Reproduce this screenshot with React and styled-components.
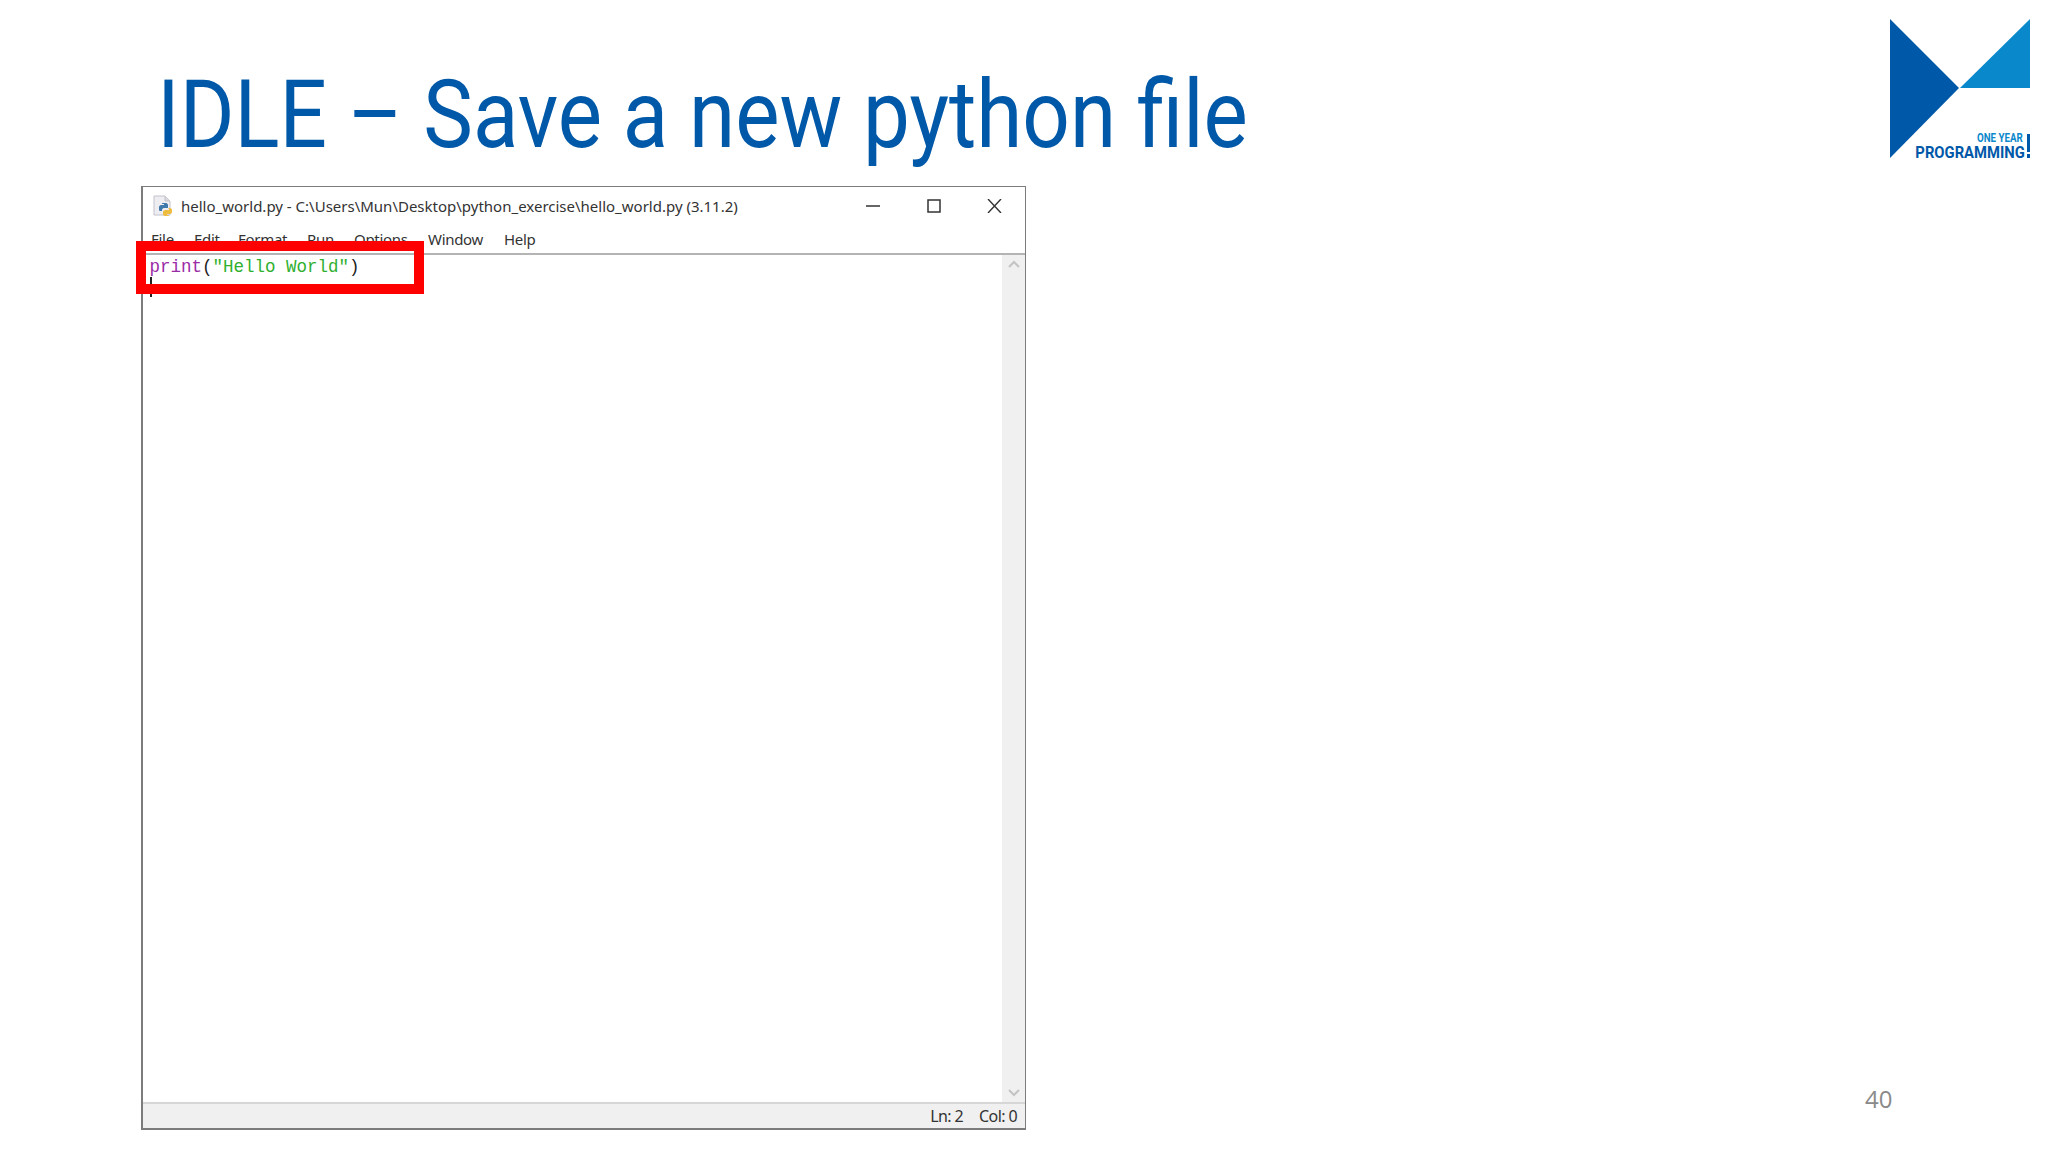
import React from 'react';
import styled, { createGlobalStyle } from 'styled-components';

const GlobalStyle = createGlobalStyle`
    html, body {
        margin: 0;
        padding: 0;
        background: #ffffff;
    }
`;

const Slide = styled.div`
    width: 2048px;
    height: 1152px;
    display: flex;
    flex-direction: column;
    overflow: hidden;
    background: #ffffff;
`;

const Header = styled.div`
    height: 186px;
    display: flex;
    justify-content: space-between;
    align-items: flex-start;
    padding: 19px 18px 0 157px;
    box-sizing: border-box;
`;

const Title = styled.h1`
    margin: 41px 0 0;
    font-family: Roboto, "Liberation Sans", sans-serif;
    font-weight: 400;
    font-size: 94px;
    line-height: 110px;
    color: #0058a8;
    white-space: nowrap;
    transform: scaleX(0.889);
    transform-origin: left center;
`;

const LogoBox = styled.div`
    position: relative;
    width: 140px;
    height: 140px;
    flex: none;
`;

const LogoCaption = styled.div`
    position: absolute;
    right: 5px;
    bottom: -1px;
    display: flex;
    flex-direction: column;
    align-items: flex-end;
    font-family: Roboto, sans-serif;
    font-weight: 700;
    white-space: nowrap;
`;

const OneYear = styled.span`
    font-size: 12.5px;
    line-height: 14px;
    color: #0a88cc;
    transform: scaleX(0.78);
    transform-origin: right center;
    margin-right: 2px;
`;

const Programming = styled.span`
    font-size: 17px;
    line-height: 15px;
    color: #0058a8;
    transform: scaleX(0.87);
    transform-origin: right center;
`;

const Bang = styled.div`
    position: absolute;
    right: 0;
    top: 115px;
    width: 3px;
    height: 18px;
    background: #0058a8;
    &::after {
        content: '';
        position: absolute;
        left: 0;
        top: 20px;
        width: 3px;
        height: 4px;
        background: #0058a8;
    }
`;

const Body = styled.div`
    display: flex;
    align-items: flex-end;
    padding-left: 141px;
`;

const Window = styled.div`
    position: relative;
    width: 885px;
    height: 944px;
    box-sizing: border-box;
    display: flex;
    flex-direction: column;
    border: 1px solid #7c7c7c;
    border-left-width: 2px;
    border-bottom-width: 2px;
    background: #ffffff;
    font-family: "Noto Sans", "Open Sans", sans-serif;
    color: #333;
`;

const TitleBar = styled.div`
    height: 38px;
    display: flex;
    align-items: center;
    padding-left: 10px;
    flex: none;
`;

const FileName = styled.span`
    margin-left: 6px;
    font-size: 15px;
    white-space: nowrap;
`;

const Controls = styled.div`
    margin-left: auto;
    display: flex;
    align-items: center;
    gap: 46px;
    padding-right: 23px;
    color: #333;
`;

const MenuBar = styled.div`
    height: 28px;
    display: flex;
    align-items: center;
    flex: none;
    padding-left: 8px;
    border-bottom: 2px solid #b4b4b4;
`;

const MenuItem = styled.span`
    width: ${(p) => p.$w}px;
    font-size: 15px;
    letter-spacing: -0.3px;
`;

const Main = styled.div`
    flex: 1;
    display: flex;
    min-height: 0;
`;

const Editor = styled.div`
    position: relative;
    flex: 1;
    padding: 2px 0 0 6.5px;
    font-family: "Liberation Mono", monospace;
    font-size: 17.5px;
    line-height: 20px;
    color: #222;
`;

const Keyword = styled.span`
    color: #9a2ca6;
`;

const Str = styled.span`
    color: #2fb02f;
`;

const Caret = styled.div`
    width: 2px;
    height: 20px;
    background: #222;
`;

const Scrollbar = styled.div`
    width: 23px;
    flex: none;
    display: flex;
    flex-direction: column;
    justify-content: space-between;
    align-items: center;
    padding: 5px 0 5px;
    box-sizing: border-box;
    background: #f0f0f0;
    color: #c4c4c4;
`;

const StatusBar = styled.div`
    height: 26px;
    flex: none;
    display: flex;
    align-items: center;
    justify-content: flex-end;
    gap: 16px;
    padding-right: 8px;
    background: #f0f0f0;
    border-top: 2px solid #d6d6d6;
    box-sizing: border-box;
    font-size: 16px;
    letter-spacing: -0.6px;
`;

const Highlight = styled.div`
    position: absolute;
    left: -7px;
    top: 54px;
    width: 288px;
    height: 53px;
    box-sizing: border-box;
    border: 10px solid #fe0000;
`;

const PageNumber = styled.div`
    margin: 0 0 16px 839px;
    font-family: "Open Sans", sans-serif;
    font-size: 24px;
    line-height: 30px;
    color: #8a8a8a;
`;

function Logo() {
    return (
        <LogoBox>
            <svg width="140" height="140" viewBox="1890 19 140 140">
                <polygon points="1890,19 1959,88 1890,158" fill="#0058a8" />
                <polygon points="1960,88 2030,19 2030,88" fill="#0a88cc" />
            </svg>
            <LogoCaption>
                <OneYear>ONE YEAR</OneYear>
                <Programming>PROGRAMMING</Programming>
            </LogoCaption>
            <Bang />
        </LogoBox>
    );
}

function FileIcon() {
    return (
        <svg width="22" height="22" viewBox="0 0 22 22">
            <path d="M1 1h11l5 5v14H1z" fill="#eeeef2" stroke="#c2c2ca" />
            <path d="M12 1v5h5" fill="#d8d8de" stroke="#c2c2ca" />
            <path d="M10 8h3c1 0 2 1 2 2v3h-4c-1 0-2 1-2 2v1H7c-1 0-1-1-1-2v-2c0-1 1-2 2-2h3v-1H9c0-1 0-1 1-1z" fill="#3f78ab" />
            <path d="M15 13h2c1 0 2 1 2 2v2c0 1-1 2-2 2h-3v1h2c0 1-1 1-2 1h-2c-1 0-2-1-2-2v-2c0-1 1-2 2-2h3c1 0 1 0 1-1z" fill="#eebd3f" />
        </svg>
    );
}

function WindowControls() {
    return (
        <Controls>
            <svg width="15" height="14" viewBox="0 0 15 14"><path d="M0 7h14" stroke="currentColor" strokeWidth="1.5" /></svg>
            <svg width="14" height="14" viewBox="0 0 14 14"><rect x="1" y="1" width="12" height="12" fill="none" stroke="currentColor" strokeWidth="1.5" /></svg>
            <svg width="15" height="14" viewBox="0 0 15 14"><path d="M1 0l13 14M14 0L1 14" stroke="currentColor" strokeWidth="1.4" /></svg>
        </Controls>
    );
}

function Chevron({ down }) {
    return (
        <svg width="12" height="8" viewBox="0 0 12 8">
            <path d={down ? 'M1 1l5 5 5-5' : 'M1 7l5-5 5 5'} fill="none" stroke="currentColor" strokeWidth="2" />
        </svg>
    );
}

const menus = [
    ['File', 43],
    ['Edit', 44],
    ['Format', 69],
    ['Run', 47],
    ['Options', 74],
    ['Window', 76],
    ['Help', 50],
];

export default function App() {
    return (
        <Slide>
            <GlobalStyle />
            <Header>
                <Title>IDLE – Save a new python file</Title>
                <Logo />
            </Header>
            <Body>
                <Window>
                    <TitleBar>
                        <FileIcon />
                        <FileName>hello_world.py - C:\Users\Mun\Desktop\python_exercise\hello_world.py (3.11.2)</FileName>
                        <WindowControls />
                    </TitleBar>
                    <MenuBar>
                        {menus.map(([label, w]) => (
                            <MenuItem key={label} $w={w}>{label}</MenuItem>
                        ))}
                    </MenuBar>
                    <Main>
                        <Editor>
                            <div><Keyword>print</Keyword>(<Str>"Hello World"</Str>)</div>
                            <Caret />
                        </Editor>
                        <Scrollbar>
                            <Chevron />
                            <Chevron down />
                        </Scrollbar>
                    </Main>
                    <StatusBar>
                        <span>Ln: 2</span>
                        <span>Col: 0</span>
                    </StatusBar>
                    <Highlight />
                </Window>
                <PageNumber>40</PageNumber>
            </Body>
        </Slide>
    );
}
